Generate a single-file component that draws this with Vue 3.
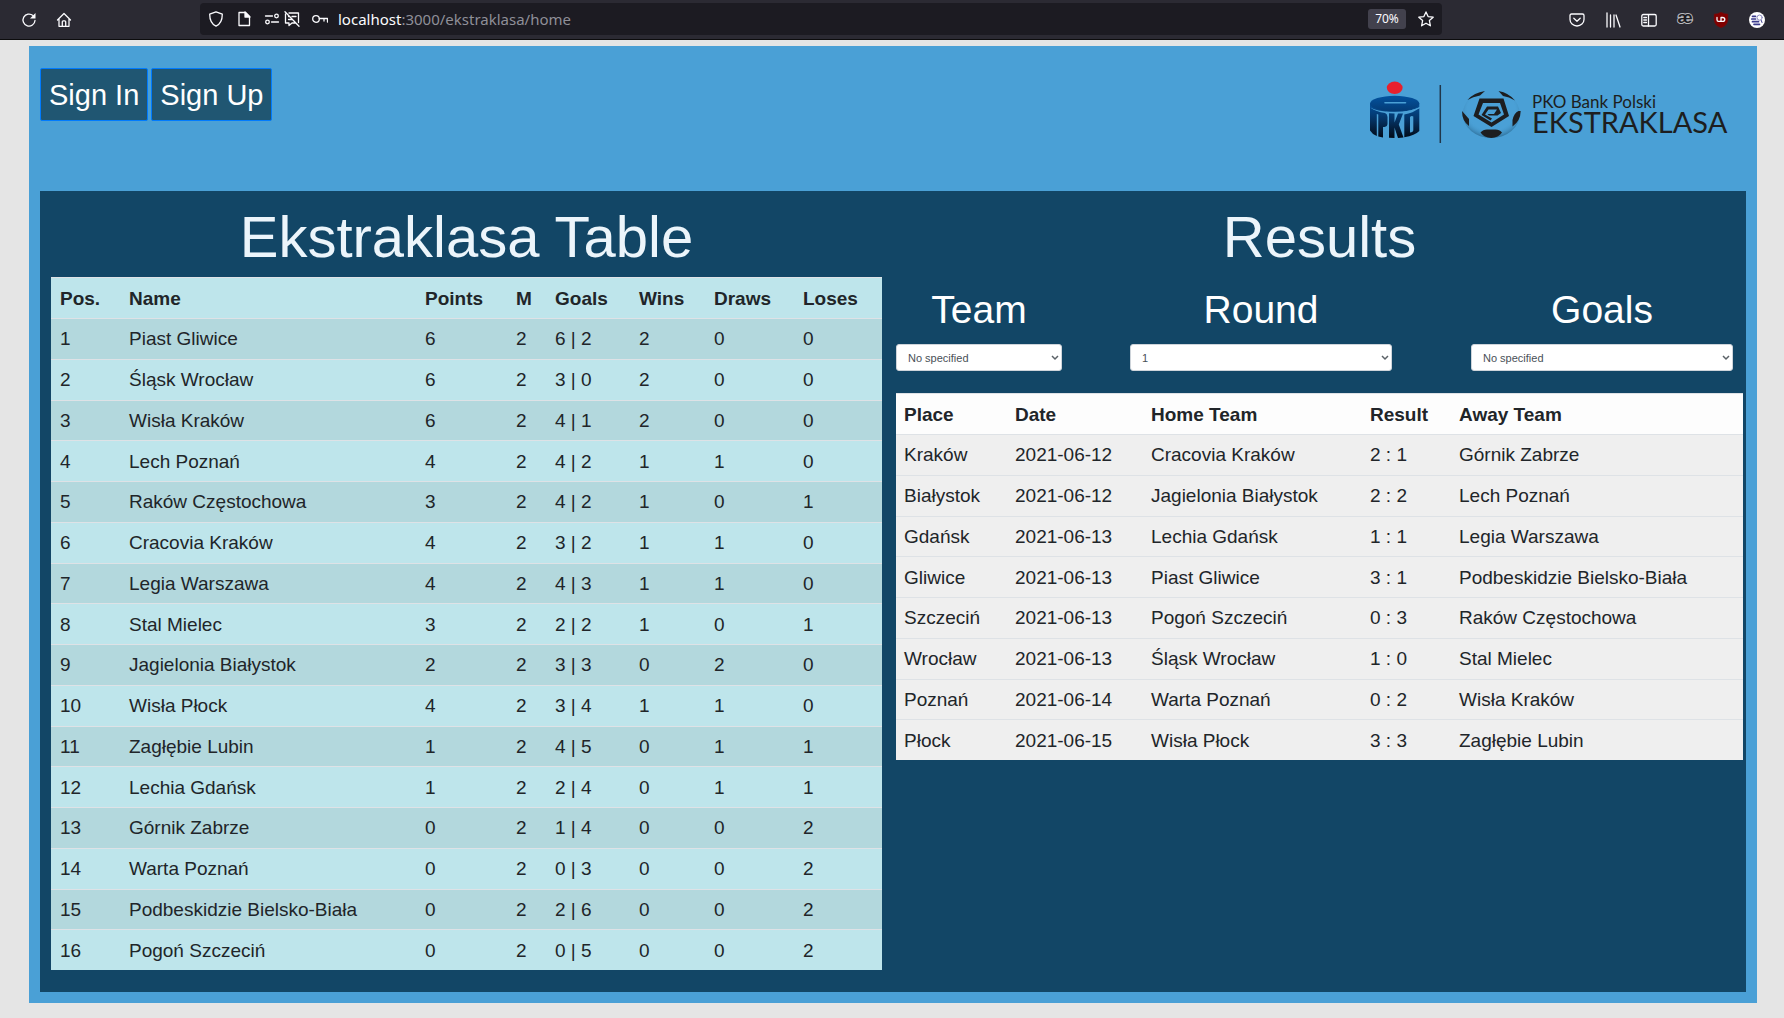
<script setup>
import { ref } from 'vue'

const standings = [
  ['Piast Gliwice', 6, 2, '6 | 2', 2, 0, 0],
  ['Śląsk Wrocław', 6, 2, '3 | 0', 2, 0, 0],
  ['Wisła Kraków', 6, 2, '4 | 1', 2, 0, 0],
  ['Lech Poznań', 4, 2, '4 | 2', 1, 1, 0],
  ['Raków Częstochowa', 3, 2, '4 | 2', 1, 0, 1],
  ['Cracovia Kraków', 4, 2, '3 | 2', 1, 1, 0],
  ['Legia Warszawa', 4, 2, '4 | 3', 1, 1, 0],
  ['Stal Mielec', 3, 2, '2 | 2', 1, 0, 1],
  ['Jagielonia Białystok', 2, 2, '3 | 3', 0, 2, 0],
  ['Wisła Płock', 4, 2, '3 | 4', 1, 1, 0],
  ['Zagłębie Lubin', 1, 2, '4 | 5', 0, 1, 1],
  ['Lechia Gdańsk', 1, 2, '2 | 4', 0, 1, 1],
  ['Górnik Zabrze', 0, 2, '1 | 4', 0, 0, 2],
  ['Warta Poznań', 0, 2, '0 | 3', 0, 0, 2],
  ['Podbeskidzie Bielsko-Biała', 0, 2, '2 | 6', 0, 0, 2],
  ['Pogoń Szczeciń', 0, 2, '0 | 5', 0, 0, 2]
]
const standingHeads = ['Pos.', 'Name', 'Points', 'M', 'Goals', 'Wins', 'Draws', 'Loses']

const results = [
  ['Kraków', '2021-06-12', 'Cracovia Kraków', '2 : 1', 'Górnik Zabrze'],
  ['Białystok', '2021-06-12', 'Jagielonia Białystok', '2 : 2', 'Lech Poznań'],
  ['Gdańsk', '2021-06-13', 'Lechia Gdańsk', '1 : 1', 'Legia Warszawa'],
  ['Gliwice', '2021-06-13', 'Piast Gliwice', '3 : 1', 'Podbeskidzie Bielsko-Biała'],
  ['Szczeciń', '2021-06-13', 'Pogoń Szczeciń', '0 : 3', 'Raków Częstochowa'],
  ['Wrocław', '2021-06-13', 'Śląsk Wrocław', '1 : 0', 'Stal Mielec'],
  ['Poznań', '2021-06-14', 'Warta Poznań', '0 : 2', 'Wisła Kraków'],
  ['Płock', '2021-06-15', 'Wisła Płock', '3 : 3', 'Zagłębie Lubin']
]
const resultHeads = ['Place', 'Date', 'Home Team', 'Result', 'Away Team']

const filters = ref([
  { id: 'team', label: 'Team', value: 'No specified' },
  { id: 'round', label: 'Round', value: '1' },
  { id: 'goals', label: 'Goals', value: 'No specified' }
])
</script>

<template>
  <div class="page">
    <header class="toolbar">
      <div class="nav">
        <button class="icon" type="button" aria-label="Reload">
          <svg viewBox="0 0 16 16"><path d="M14 8.500a6 6 0 1 1-2-4.900" /><path class="solid" d="M14.500 1v5.500H9z" stroke="none" /></svg>
        </button>
        <button class="icon" type="button" aria-label="Home">
          <svg viewBox="0 0 16 16"><path d="M1.500 8 8 1.500 14.500 8M3 7v7.300h10V7M6.300 14V9.800q0-1 1-1h1.400q1 0 1 1V14" /></svg>
        </button>
      </div>
      <div class="address">
        <button class="icon shield" type="button" aria-label="Protection">
          <svg viewBox="0 0 16 16"><path d="M8 .8 14.300 3.200C14.300 9 12.500 13 8 15.200 3.500 13 1.700 9 1.700 3.200z" /></svg>
        </button>
        <button class="icon doc" type="button" aria-label="Page info">
          <svg viewBox="0 0 16 16"><path d="M3 1.500h6.500l4 4v9H3z" /><path class="solid" d="M9 1v5h5z" /></svg>
        </button>
        <button class="icon perms" type="button" aria-label="Permissions">
          <svg viewBox="0 0 16 16"><circle cx="12.500" cy="5" r="1.800" /><circle cx="3.500" cy="11" r="1.800" /><path d="M1.500 5h7M7.500 11h7" /></svg>
        </button>
        <button class="icon mute" type="button" aria-label="Notifications blocked">
          <svg viewBox="0 0 16 16"><path d="M5 2h9.500v9.500M11 12H8l-3 2.500V12H1.500V3M4.500 5.500h1M8 5.500h4M4.500 8.500h4M1 .8l14 14.400" /></svg>
        </button>
        <button class="icon key" type="button" aria-label="Saved login">
          <svg viewBox="0 0 16 16"><circle cx="4" cy="8" r="3.300" /><path d="M7.300 7.500h8.200V11M12 7.500V10" /></svg>
        </button>
        <div class="url"><b>localhost</b>:3000/ekstraklasa/home</div>
        <button class="zoom" type="button">70%</button>
        <button class="icon star" type="button" aria-label="Bookmark">
          <svg viewBox="0 0 16 16"><path d="m8 .9 2.100 4.700 5.100.6-3.800 3.400 1 5.200L8 12.200l-4.400 2.600 1-5.200L.8 6.200l5.100-.6z" /></svg>
        </button>
      </div>
      <div class="extras">
        <button class="icon" type="button" aria-label="Pocket">
          <svg viewBox="0 0 16 16"><path d="M2.500 2h11q1.500 0 1.500 1.500V7.500a7 6.500 0 0 1-14 0V3.500Q1 2 2.500 2zM4.800 6.200 8 9.200l3.200-3" /></svg>
        </button>
        <button class="icon" type="button" aria-label="Library">
          <svg viewBox="0 0 16 16"><path d="M2 1v14M5.500 3v12M9 3v12M11 3l4 12" /></svg>
        </button>
        <button class="icon" type="button" aria-label="Sidebar">
          <svg viewBox="0 0 16 16"><rect x=".8" y="2.500" width="14.400" height="11.500" rx="1.500" /><path d="M7.500 3v11M2.800 5.500h2.700M2.800 8h2.700M2.800 10.500h2.700" /></svg>
        </button>
        <button class="icon glyph" type="button">æ</button>
        <button class="icon" type="button" aria-label="Content blocker">
          <svg viewBox="0 0 16 16"><path d="M8 0q3 2 7 2v6q0 5-7 8-7-3-7-8V2q4 0 7-2z" fill="#800000" stroke="#5b1a1e" stroke-width=".5" /><path d="M4 5.500v2.200q0 1.600 1.500 1.600H8V5.500h1.500q2.300 0 2.300 1.900T9.500 9.300H8" stroke-width="1.300" /></svg>
        </button>
        <button class="icon" type="button" aria-label="Search helper">
          <svg viewBox="0 0 16 16"><circle cx="8" cy="8" r="8" fill="#fff" stroke="none" /><g stroke="#3b3b8c"><path d="M3.500 4.300h3M2.800 7h3.700M3.500 9.700h6M5 12.300h5.500" stroke-width="1.700" /><circle cx="10.600" cy="5.600" r="2.600" stroke="#8a8ac0" stroke-width="1" /><path d="m12.300 8.500.7 2" stroke-width="1" /></g></svg>
        </button>
      </div>
    </header>

    <main class="shell">
      <div class="top">
        <div class="auth">
          <button type="button">Sign In</button>
          <button type="button">Sign Up</button>
        </div>
        <div class="brand">
          <svg class="marks" viewBox="0 0 158 68" aria-hidden="true">
            <defs>
              <linearGradient id="drum" gradientUnits="userSpaceOnUse" x1="0" y1="27" x2="0" y2="60">
                <stop offset="0" stop-color="#034d96" />
                <stop offset=".45" stop-color="#043263" />
                <stop offset="1" stop-color="#020a16" />
              </linearGradient>
              <linearGradient id="lid" x1="0" y1="0" x2="0" y2="1">
                <stop offset="0" stop-color="#03529f" />
                <stop offset="1" stop-color="#043b75" />
              </linearGradient>
              <radialGradient id="shade" cx=".5" cy=".42" r=".58">
                <stop offset=".7" stop-color="#4aa0d6" stop-opacity="0" />
                <stop offset="1" stop-color="#174766" stop-opacity=".5" />
              </radialGradient>
            </defs>
            <ellipse cx="28.700" cy="9.800" rx="7.900" ry="6.200" fill="#e8202d" />
            <g fill="url(#drum)">
              <path d="M4 25.500 5 30Q10 33.500 19 35 21.500 36 21.500 39V45.500Q21.500 48.500 18.500 49H17V59.500L12.300 58.500V36.500L10.800 36V58Q6 56 4 52.500z" />
              <path d="M23 35.300H28.500V44.500L32 35.500H37L32.800 46.500 37.500 59.500 32 60 28.500 49.500V60L23 59.700z" />
              <path fill-rule="evenodd" d="M38.300 36.500Q47 35 53.300 30V53Q49 57.500 38.300 59.300zM44 39V54.500Q47 54.500 47.300 52.500V38.500Q45.500 37.500 44 39z" />
              <path d="M4 25.500H53.300V29Q47 33.500 28.700 33.800 9 33.500 4 29z" />
            </g>
            <path d="M20 34.300Q36 36.500 53.500 30" fill="none" stroke="#4aa0d6" stroke-width="1" />
            <ellipse cx="28.700" cy="25.500" rx="24.600" ry="7.700" fill="url(#lid)" />
            <path d="M19 24.700H39.500" stroke="#4aa0d6" stroke-width="1.600" stroke-linecap="round" />
            <path d="M74.300 7V65" stroke="#20364a" stroke-width="1.500" />
            <ellipse cx="125.300" cy="36" rx="28.500" ry="24" fill="url(#shade)" />
            <g fill="#1d1e20">
              <path d="M101.500 22Q108 14.500 119 13L114 17.500Q107 18.500 101.500 22zM149 22.500Q143 15 132.500 13L137 18Q143 18.500 149 22.500z" />
              <path d="M96 33 103 41V48Q96 43 96 33zM154.700 33Q154.500 43 146.500 48.500V42Q148 35 152.500 33z" />
              <path d="M114.500 54.500Q117 51.500 121 51.500H129.500Q133.500 51.500 136 54.500 132.500 59.500 125.300 60 118 59.500 114.500 54.500z" />
              <path fill-rule="evenodd" d="M113.500 20.500H137.500L143 38 125.500 49 107.500 38zM117 25 112.500 36.500 125.500 44.500 138 36.500 134 25z" />
              <path d="M121 28.500H132L135 35 131.500 37.500H123L121.500 36H128L131 31.500H122.500L119 36.500 126 40.500 124.500 42.500 115.500 37z" />
            </g>
          </svg>
          <div class="words">
            <span class="sponsor">PKO Bank Polski</span>
            <span class="league">EKSTRAKLASA</span>
          </div>
        </div>
      </div>

      <div class="panel">
        <section class="standings">
          <h1>Ekstraklasa Table</h1>
          <table>
            <colgroup><col v-for="(h, i) in standingHeads" :key="h" :class="'s' + i" /></colgroup>
            <thead>
              <tr><th v-for="h in standingHeads" :key="h" scope="col">{{ h }}</th></tr>
            </thead>
            <tbody>
              <tr v-for="(row, i) in standings" :key="row[0]">
                <td>{{ i + 1 }}</td>
                <td v-for="(cell, j) in row" :key="j">{{ cell }}</td>
              </tr>
            </tbody>
          </table>
        </section>

        <section class="results">
          <h1>Results</h1>
          <div class="filters">
            <div v-for="f in filters" :key="f.id" :class="['filter', f.id]">
              <label :for="f.id">{{ f.label }}</label>
              <div class="pick">
                <select :id="f.id" v-model="f.value"><option>{{ f.value }}</option></select>
                <svg viewBox="0 0 8 6" aria-hidden="true"><path d="m1 1 3 3 3-3" /></svg>
              </div>
            </div>
          </div>
          <table>
            <colgroup><col v-for="(h, i) in resultHeads" :key="h" :class="'r' + i" /></colgroup>
            <thead>
              <tr><th v-for="h in resultHeads" :key="h" scope="col">{{ h }}</th></tr>
            </thead>
            <tbody>
              <tr v-for="row in results" :key="row[0]">
                <td v-for="(cell, j) in row" :key="j">{{ cell }}</td>
              </tr>
            </tbody>
          </table>
        </section>
      </div>
    </main>
  </div>
</template>

<style>
body {
  margin: 0;
  background: #e5e5e5;
}
</style>

<style scoped>
* {
  box-sizing: border-box;
}
.page {
  font-family: "Liberation Sans", Arial, sans-serif;
  color: #212529;
}
button {
  margin: 0;
  padding: 0;
  border: 0;
  background: none;
  color: inherit;
  font: inherit;
}

/* browser bar */
.toolbar {
  display: flex;
  align-items: center;
  height: 40px;
  background: #2b2a33;
  border-bottom: 1px solid #0c0c0d;
  color: #fbfbfe;
  font-family: "Noto Sans", "Open Sans", sans-serif;
}
.nav {
  display: flex;
  gap: 19px;
  width: 200px;
  padding-left: 21px;
}
.icon {
  flex: none;
  width: 16px;
  height: 16px;
}
.icon svg {
  display: block;
  width: 16px;
  height: 16px;
  fill: none;
  stroke: #fbfbfe;
  stroke-width: 1.3;
  stroke-linecap: round;
  stroke-linejoin: round;
}
.icon .solid {
  fill: #fbfbfe;
}
.glyph {
  display: flex;
  align-items: center;
  justify-content: center;
  padding-bottom: 3px;
  color: #1c1b22;
  font-family: "Liberation Sans", Arial, sans-serif;
  font-size: 17px;
  font-weight: 700;
  line-height: 16px;
  paint-order: stroke fill;
  -webkit-text-stroke: 2px #b8b8bd;
}
.address {
  display: flex;
  flex: 1;
  align-items: center;
  height: 32px;
  margin-bottom: 1px;
  padding: 0 8px;
  border-radius: 4px;
  background: #1c1b22;
}
.doc {
  margin-left: 12px;
}
.perms {
  margin-left: 12px;
}
.mute {
  margin-left: 4px;
}
.key {
  margin-left: 12px;
}
.url {
  flex: 1;
  margin-left: 10px;
  color: #8f8f98;
  font-size: 15px;
  line-height: 20px;
}
.url b {
  color: #fbfbfe;
  font-weight: 400;
}
.zoom {
  width: 38px;
  height: 20px;
  border-radius: 3px;
  background: #42414d;
  font-size: 12px;
  line-height: 20px;
}
.star {
  margin-left: 12px;
}
.extras {
  display: flex;
  gap: 20px;
  margin-left: 127px;
  margin-right: 19px;
}

/* application */
.shell {
  margin: 6px 27px 15px 29px;
  padding: 0 11px 11px;
  background: #4aa0d6;
}
.top {
  display: flex;
  justify-content: space-between;
  align-items: flex-start;
  min-height: 145px;
}
.auth {
  display: flex;
  gap: 3px;
  padding-top: 22px;
}
.auth button {
  height: 53px;
  padding: 1px 8px 0;
  border: 1px solid #007bff;
  border-radius: 2px;
  background: #205672;
  color: #fff;
  font-size: 29px;
}
.brand {
  display: flex;
  margin: 32px 16px 0 0;
  color: #1d1e20;
  font-family: Lato, sans-serif;
}
.marks {
  width: 158px;
  height: 68px;
}
.words {
  display: flex;
  flex-direction: column;
  width: 198px;
  margin-left: 8px;
  padding-top: 14px;
  white-space: nowrap;
}
.sponsor {
  font-size: 17px;
  line-height: 20px;
}
.league {
  font-size: 29px;
  line-height: 20px;
}
.panel {
  display: flex;
  gap: 14px;
  padding: 0 3px 22px 11px;
  background: #124666;
}
.standings {
  flex: 831;
}
.results {
  flex: 847;
}
h1 {
  margin: 0;
  padding: 11px 0 5px;
  color: #ecf5fb;
  font-size: 58px;
  font-weight: 400;
  line-height: 70px;
  text-align: center;
}
table {
  width: 100%;
  border-collapse: collapse;
  table-layout: fixed;
  font-size: 19px;
  line-height: 23px;
}
.standings table {
  height: 693px;
  background: #bee5eb;
}
.results table {
  height: 367px;
  margin-top: 22px;
  background: #efefef;
}
th,
td {
  padding: 8px;
  border-top: 1px solid #dee2e6;
  text-align: left;
  white-space: nowrap;
}
th {
  height: 41px;
}
.standings th,
.standings td {
  padding-left: 9px;
}
.standings tbody tr:nth-child(odd) {
  background: #b3d8dd;
}
.results thead {
  background: #fdfdfd;
}
.s0 { width: 69px; }
.s1 { width: 296px; }
.s2 { width: 91px; }
.s3 { width: 39px; }
.s4 { width: 84px; }
.s5 { width: 75px; }
.s6 { width: 89px; }
.s7 { width: 88px; }
.r0 { width: 111px; }
.r1 { width: 136px; }
.r2 { width: 219px; }
.r3 { width: 89px; }
.r4 { width: 292px; }
.filters {
  display: grid;
  grid-template-columns: 166fr 68fr 262fr 79fr 262fr 10fr;
  padding-top: 9px;
}
.team { grid-column: 1; }
.round { grid-column: 3; }
.goals { grid-column: 5; }
.filter label {
  display: block;
  margin-bottom: 10px;
  color: #fff;
  font-size: 39px;
  line-height: 48px;
  text-align: center;
}
.pick {
  position: relative;
}
.pick select {
  display: block;
  width: 100%;
  height: 27px;
  padding: 0 11px;
  appearance: none;
  border: 1px solid #ced4da;
  border-radius: 3px;
  background: #fff;
  color: #495057;
  font-family: inherit;
  font-size: 11px;
}
.pick svg {
  position: absolute;
  top: 11px;
  right: 3px;
  width: 8px;
  height: 6px;
  fill: none;
  stroke: #5b6167;
  stroke-width: 1.5;
  pointer-events: none;
}
</style>
